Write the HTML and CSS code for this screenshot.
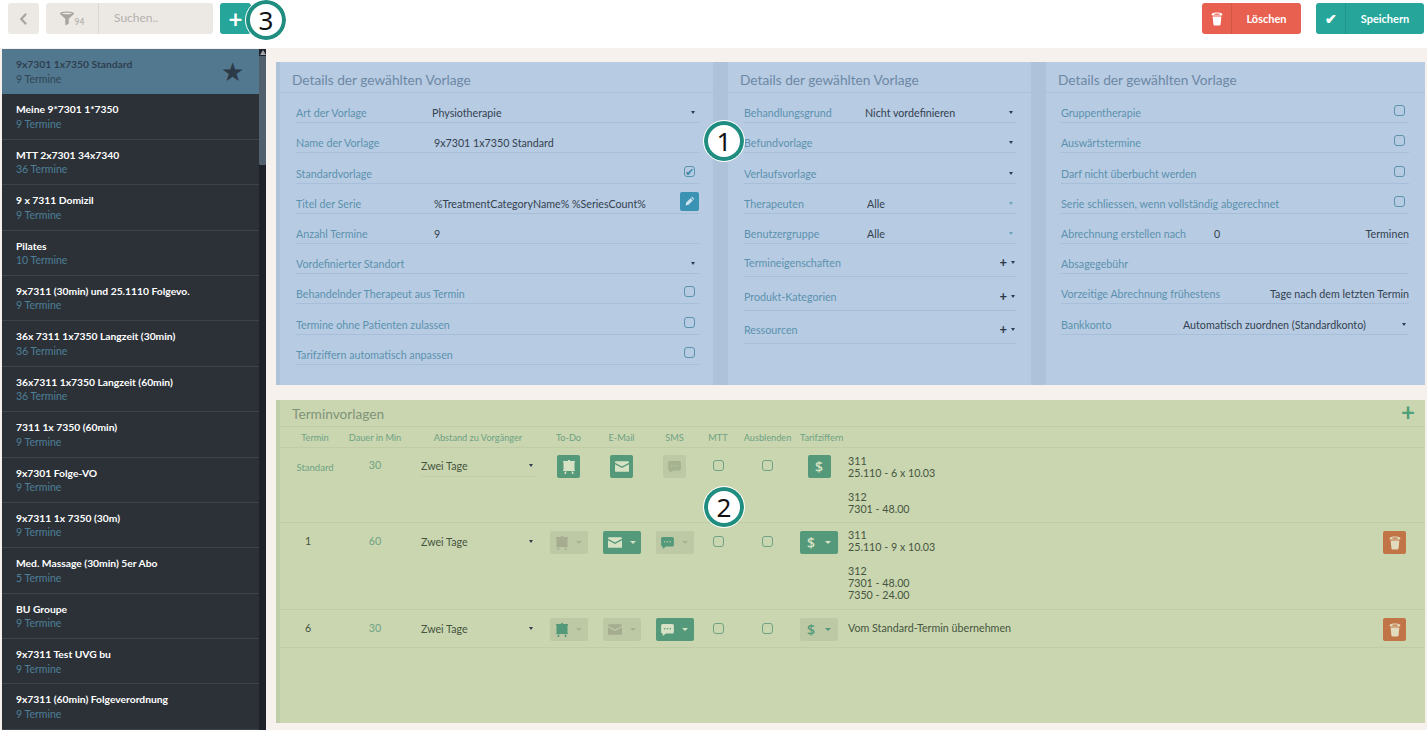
FILE: index.html
```html
<!DOCTYPE html>
<html lang="de">
<head>
<meta charset="utf-8">
<title>Serienvorlagen</title>
<link rel="stylesheet" href="styles.css">
</head>
<body>
<svg class="defs" width="0" height="0" aria-hidden="true">
  <symbol id="i-trash" viewBox="0 0 14 16"><path fill="currentColor" fill-rule="evenodd" d="M7 .4c3 0 6.300.7 6.300 2.300 0 .6-.4 1-1 1.300H1.700c-.6-.3-1-.7-1-1.300C.7 1.100 4 .4 7 .4zM7 1.700c-1.800 0-3.300.3-3.300.7S5.200 3 7 3s3.300-.2 3.300-.6S8.800 1.700 7 1.700zM1.900 5h10.200l-.9 9c-.1 1-.8 1.600-1.800 1.600H4.600c-1 0-1.700-.6-1.800-1.600z"/></symbol>
  <symbol id="i-board" viewBox="0 0 12 14"><path fill="currentColor" d="M5 0h2v1h5v1.200h-.5V10h.5v1H0v-1h.5V2.200H0V1h5zM2 11.500h1.500L3 14H1.300zM8.500 11.500H10l.7 2.500H9z"/></symbol>
  <symbol id="i-mail" viewBox="0 0 16 12"><path fill="currentColor" d="M1 0h14c.6 0 1 .4 1 1v.6L8 6 0 1.600V1c0-.6.400-1 1-1zM0 3.400l8 4.400 8-4.400V11c0 .6-.4 1-1 1H1c-.6 0-1-.4-1-1z"/></symbol>
  <symbol id="i-chat" viewBox="0 0 16 15"><path fill="currentColor" fill-rule="evenodd" d="M2 0h12c1.100 0 2 .9 2 2v8c0 1.100-.9 2-2 2H6l-4 3v-3c-1.100 0-2-.9-2-2V2C0 .9.900 0 2 0zm2.500 5a1 1 0 100 2 1 1 0 000-2zm3.500 0a1 1 0 100 2 1 1 0 000-2zm3.500 0a1 1 0 100 2 1 1 0 000-2z"/></symbol>
  <symbol id="i-funnel" viewBox="0 0 16 16"><path fill="currentColor" fill-rule="evenodd" d="M8 0c4 0 8 .9 8 2.300 0 .6-.4 1-.9 1.400L10 8.300V14l-4 2V8.300L.9 3.700C.4 3.300 0 2.900 0 2.300 0 .9 4 0 8 0zm0 1.400c-3 0-5.600.5-5.600.9s2.600.9 5.600.9 5.600-.5 5.600-.9-2.600-.9-5.600-.9z"/></symbol>
</svg>

<header class="topbar">
  <button class="btn-back" type="button" aria-label="Zurück"><svg class="back-icon" viewBox="0 0 10 16"><path d="M8 2L2.500 8 8 14" fill="none" stroke="currentColor" stroke-width="2.600"/></svg></button>
  <div class="search">
    <span class="search-filter"><svg class="funnel"><use href="#i-funnel"/></svg><small>94</small></span>
    <span class="search-text">Suchen..</span>
  </div>
  <button class="btn-add" type="button">+</button>
  <div class="top-actions">
    <button class="action action-del" type="button"><span class="action-icon"><svg class="action-svg"><use href="#i-trash"/></svg></span><span class="action-label">Löschen</span></button>
    <button class="action action-save" type="button"><span class="action-icon">✔</span><span class="action-label">Speichern</span></button>
  </div>
</header>

<div class="app">
  <aside class="sidebar">
    <ul class="list">
      <li class="item item-active"><b>9x7301 1x7350 Standard</b><span>9 Termine</span><i class="star">★</i></li>
      <li class="item"><b>Meine 9*7301 1*7350</b><span>9 Termine</span></li>
      <li class="item"><b>MTT 2x7301 34x7340</b><span>36 Termine</span></li>
      <li class="item"><b>9 x 7311 Domizil</b><span>9 Termine</span></li>
      <li class="item"><b>Pilates</b><span>10 Termine</span></li>
      <li class="item"><b>9x7311 (30min) und 25.1110 Folgevo.</b><span>9 Termine</span></li>
      <li class="item"><b>36x 7311 1x7350 Langzeit (30min)</b><span>36 Termine</span></li>
      <li class="item"><b>36x7311 1x7350 Langzeit (60min)</b><span>36 Termine</span></li>
      <li class="item"><b>7311 1x 7350 (60min)</b><span>9 Termine</span></li>
      <li class="item"><b>9x7301 Folge-VO</b><span>9 Termine</span></li>
      <li class="item"><b>9x7311 1x 7350 (30m)</b><span>9 Termine</span></li>
      <li class="item"><b>Med. Massage (30min) 5er Abo</b><span>5 Termine</span></li>
      <li class="item"><b>BU Groupe</b><span>9 Termine</span></li>
      <li class="item"><b>9x7311 Test UVG bu</b><span>9 Termine</span></li>
      <li class="item"><b>9x7311 (60min) Folgeverordnung</b><span>9 Termine</span></li>
    </ul>
    <div class="scrollbar"><span class="scroll-arrow"></span><span class="scroll-thumb"></span></div>
  </aside>

  <main class="main">
    <section class="details">
      <div class="col col-1">
        <h2 class="col-title">Details der gewählten Vorlage</h2>
        <div class="row"><label>Art der Vorlage</label><span class="val">Physiotherapie</span><i class="caret"></i></div>
        <div class="row"><label>Name der Vorlage</label><span class="val val-shift">9x7301 1x7350 Standard</span></div>
        <div class="row"><label>Standardvorlage</label><span class="val"></span><i class="check checked">✔</i></div>
        <div class="row"><label>Titel der Serie</label><span class="val val-shift">%TreatmentCategoryName% %SeriesCount%</span><button class="edit-btn" type="button" aria-label="Bearbeiten"><svg viewBox="0 0 12 12" class="pencil"><path fill="currentColor" d="M8.500.8l2.700 2.700-1.100 1.100-2.700-2.700zM6.700 2.600l2.700 2.700-5.300 5.300-3.400.8.700-3.500z"/></svg></button></div>
        <div class="row"><label>Anzahl Termine</label><span class="val val-shift">9</span></div>
        <div class="row"><label class="wide">Vordefinierter Standort</label><span class="val"></span><i class="caret"></i></div>
        <div class="row"><label class="wide">Behandelnder Therapeut aus Termin</label><span class="val"></span><i class="check"></i></div>
        <div class="row"><label class="wide">Termine ohne Patienten zulassen</label><span class="val"></span><i class="check"></i></div>
        <div class="row"><label class="wide">Tarifziffern automatisch anpassen</label><span class="val"></span><i class="check"></i></div>
      </div>
      <div class="col col-2">
        <h2 class="col-title">Details der gewählten Vorlage</h2>
        <div class="row"><label>Behandlungsgrund</label><span class="val">Nicht vordefinieren</span><i class="caret"></i></div>
        <div class="row"><label>Befundvorlage</label><span class="val"></span><i class="caret"></i></div>
        <div class="row"><label>Verlaufsvorlage</label><span class="val"></span><i class="caret"></i></div>
        <div class="row"><label>Therapeuten</label><span class="val val-shift">Alle</span><i class="caret caret-soft"></i></div>
        <div class="row"><label>Benutzergruppe</label><span class="val val-shift">Alle</span><i class="caret caret-soft"></i></div>
        <div class="row row-tall"><label class="wide">Termineigenschaften</label><span class="val"></span><b class="plus">+</b><i class="caret"></i></div>
        <div class="row row-tall"><label class="wide">Produkt-Kategorien</label><span class="val"></span><b class="plus">+</b><i class="caret"></i></div>
        <div class="row row-tall"><label class="wide">Ressourcen</label><span class="val"></span><b class="plus">+</b><i class="caret"></i></div>
      </div>
      <div class="col col-3">
        <h2 class="col-title">Details der gewählten Vorlage</h2>
        <div class="row"><label class="wide">Gruppentherapie</label><span class="val"></span><i class="check"></i></div>
        <div class="row"><label class="wide">Auswärtstermine</label><span class="val"></span><i class="check"></i></div>
        <div class="row"><label class="wide">Darf nicht überbucht werden</label><span class="val"></span><i class="check"></i></div>
        <div class="row"><label class="wide">Serie schliessen, wenn vollständig abgerechnet</label><span class="val"></span><i class="check"></i></div>
        <div class="row"><label class="lbl-153">Abrechnung erstellen nach</label><span class="val">0</span><span class="val-end">Terminen</span></div>
        <div class="row"><label class="wide">Absagegebühr</label><span class="val"></span></div>
        <div class="row"><label class="wide">Vorzeitige Abrechnung frühestens</label><span class="val"></span><span class="val-end">Tage nach dem letzten Termin</span></div>
        <div class="row"><label class="lbl-122">Bankkonto</label><span class="val">Automatisch zuordnen (Standardkonto)</span><i class="caret"></i></div>
      </div>
    </section>

    <section class="templates">
      <div class="tpl-head"><h2 class="col-title tpl-title">Terminvorlagen</h2><span class="tpl-plus">+</span></div>
      <div class="grid grid-head">
        <span class="head-first">Termin</span><span>Dauer in Min</span><span class="head-gap">Abstand zu Vorgänger</span><span>To-Do</span><span>E-Mail</span><span>SMS</span><span>MTT</span><span>Ausblenden</span><span>Tarifziffern</span><span></span><span></span>
      </div>

      <div class="grid grid-row row-a">
        <span class="c-std">Standard</span><span class="c-dur">30</span>
        <span class="sel"><em>Zwei Tage</em><i class="caret"></i></span>
        <span class="cell"><button class="tb on tb-solo" type="button"><svg class="ic"><use href="#i-board"/></svg></button></span>
        <span class="cell"><button class="tb on tb-solo" type="button"><svg class="ic ic-mail"><use href="#i-mail"/></svg></button></span>
        <span class="cell"><button class="tb off tb-solo" type="button"><svg class="ic ic-chat"><use href="#i-chat"/></svg></button></span>
        <span class="cell"><i class="check g"></i></span><span class="cell"><i class="check g"></i></span>
        <span class="cell"><button class="tb on tb-solo dollar" type="button">$</button></span>
        <div class="codes"><p>311<br>25.110 - 6 x 10.03</p><p>312<br>7301 - 48.00</p></div>
        <span></span>
      </div>

      <div class="grid grid-row row-b">
        <span class="c-num">1</span><span class="c-dur">60</span>
        <span class="sel sel-bare"><em>Zwei Tage</em><i class="caret"></i></span>
        <span class="cell"><button class="tb off" type="button"><svg class="ic ic-dim"><use href="#i-board"/></svg><i class="tc"></i></button></span>
        <span class="cell"><button class="tb on" type="button"><svg class="ic ic-mail"><use href="#i-mail"/></svg><i class="tc"></i></button></span>
        <span class="cell"><button class="tb off" type="button"><svg class="ic ic-chat ic-green"><use href="#i-chat"/></svg><i class="tc"></i></button></span>
        <span class="cell"><i class="check g"></i></span><span class="cell"><i class="check g"></i></span>
        <span class="cell"><button class="tb on dollar" type="button">$<i class="tc"></i></button></span>
        <div class="codes"><p>311<br>25.110 - 9 x 10.03</p><p>312<br>7301 - 48.00<br>7350 - 24.00</p></div>
        <span class="cell-trash"><button class="trash" type="button" aria-label="Löschen"><svg class="trash-ic"><use href="#i-trash"/></svg></button></span>
      </div>

      <div class="grid grid-row row-c">
        <span class="c-num">6</span><span class="c-dur">30</span>
        <span class="sel sel-bare"><em>Zwei Tage</em><i class="caret"></i></span>
        <span class="cell"><button class="tb off" type="button"><svg class="ic ic-green"><use href="#i-board"/></svg><i class="tc"></i></button></span>
        <span class="cell"><button class="tb off" type="button"><svg class="ic ic-mail ic-dim"><use href="#i-mail"/></svg><i class="tc tc-dim"></i></button></span>
        <span class="cell"><button class="tb on" type="button"><svg class="ic ic-chat"><use href="#i-chat"/></svg><i class="tc"></i></button></span>
        <span class="cell"><i class="check g"></i></span><span class="cell"><i class="check g"></i></span>
        <span class="cell"><button class="tb off dollar dollar-off" type="button">$<i class="tc"></i></button></span>
        <div class="codes codes-one"><p>Vom Standard-Termin übernehmen</p></div>
        <span class="cell-trash"><button class="trash" type="button" aria-label="Löschen"><svg class="trash-ic"><use href="#i-trash"/></svg></button></span>
      </div>
    </section>
  </main>
</div>

<span class="marker marker-1">1</span>
<span class="marker marker-2">2</span>
<span class="marker marker-3">3</span>
</body>
</html>
```

FILE: styles.css
```css
* { box-sizing: border-box; }
html, body { margin: 0; padding: 0; height: 730px; overflow: hidden; }
body { font-family: "Lato", "Open Sans", sans-serif; font-size: 10.7px; background: #fff; color: #33424f; position: relative; }
.defs { position: absolute; }
button { font-family: inherit; border: 0; padding: 0; margin: 0; }
ul { list-style: none; margin: 0; padding: 0; }
p, h2 { margin: 0; }

/* top bar */
.topbar { height: 48px; display: flex; align-items: flex-start; padding: 3px 3px 0 8px; background: #fff; }
.btn-back { width: 31px; height: 31px; background: #ece9e5; border-radius: 3px; color: #a9a6a2; display: flex; align-items: center; justify-content: center; }
.back-icon { width: 9px; height: 14px; }
.search { margin-left: 7px; width: 167px; height: 31px; background: #ece9e5; border-radius: 3px; display: flex; align-items: center; }
.search-filter { width: 53px; height: 31px; border-right: 1px solid #dcd8d3; display: flex; align-items: center; justify-content: center; color: #a8a5a1; gap: 1px; }
.funnel { width: 14px; height: 15px; }
.search-filter small { font-size: 8.5px; margin-top: 6px; }
.search-text { padding-left: 15px; margin-top: -2px; color: #b3b0ac; font-size: 12px; }
.btn-add { margin-left: 7px; width: 31px; height: 31px; background: #26a69a; border-radius: 3px; color: #fff; font-size: 24px; line-height: 29px; font-weight: 700; }
.top-actions { margin-left: auto; display: flex; gap: 15px; }
.action { height: 31px; display: flex; color: #fff; border-radius: 3px; font-size: 11px; font-weight: 700; overflow: hidden; }
.action-del { width: 99px; background: #e8604f; }
.action-save { width: 108px; background: #26a69a; }
.action-icon { width: 30px; display: flex; align-items: center; justify-content: center; border-right: 1px solid rgba(0,0,0,.1); font-size: 14px; }
.action-svg { width: 12px; height: 14px; }
.action-label { flex: 1; align-self: center; text-align: center; }

/* layout */
.app { display: flex; height: 682px; background: #f6f1ed; }
.sidebar { width: 264px; margin-left: 2px; flex: none; margin-top: 1px; background: #2c3138; display: flex; overflow: hidden; }
.list { flex: 1; min-width: 0; }
.item { height: 45.400px; padding: 8px 14px 0; border-bottom: 1px solid #3d434b; position: relative; display: flex; flex-direction: column; color: #fff; line-height: 15.500px; }
.item b { font-size: 10.300px; font-weight: 700; line-height: 14.500px; white-space: nowrap; }
.item span { color: #4d7f96; font-size: 10.500px; }
.item-active { background: #52788f; border-bottom: 0; }
.item-active b { color: #2f3f50; font-weight: 700; }
.item-active span { color: #2f4454; }
.star { position: absolute; right: 15px; top: 8px; font-style: normal; font-size: 26px; line-height: 29px; color: #2c3a47; }
.scrollbar { width: 7px; flex: none; background: #1f2329; position: relative; }
.scroll-arrow { display: block; width: 0; height: 0; margin: 1px auto 0; border: 3px solid transparent; border-top: 0; border-bottom: 5px solid #9fa6ad; }
.scroll-thumb { display: block; margin-top: 1px; height: 109px; background: #52606e; border-radius: 1px; }
.main { flex: 1; min-width: 0; padding: 14px 2px 7px 10px; display: flex; flex-direction: column; gap: 15px; }

/* details */
.details { height: 323px; background: #aec3d9; padding-left: 4px; display: flex; gap: 15px; }
.col { background: #b7cbe3; }
.col-1 { width: 433px; padding: 0 14px 0 0; }
.col-2 { width: 303px; padding-right: 15px; }
.col-3 { flex: 1; padding-right: 16px; }
.col-title { height: 31px; margin-right: -15px; padding: 8px 0 0 12px; font-size: 13.700px; line-height: 20px; font-weight: 400; color: #6d88a4; border-bottom: 1px solid #abc1da; }
.col-1 .col-title { margin-right: -14px; }
.col-3 .col-title { margin-right: -16px; }
.row { margin-left: 16px; height: 30.200px; padding-bottom: 2px; display: flex; align-items: flex-end; border-bottom: 1px solid #a7bfd8; }
.col-3 .row { margin-left: 15px; }
.row-tall { height: 33.300px; padding-bottom: 6px; }
.row label { width: 136px; flex: none; color: #5b92ad; line-height: 15px; white-space: nowrap; }
.row label.wide { width: auto; }
.col-2 .row label { width: 121px; }
.col-2 .row label.wide { width: auto; }
.row label.lbl-153 { width: 153px; }
.row label.lbl-122 { width: 122px; }
.val { flex: 1; line-height: 15px; color: #33424f; white-space: nowrap; }
.val-shift { padding-left: 2px; }
.val-end { line-height: 15px; white-space: nowrap; }
.caret { flex: none; width: 0; height: 0; border: 2.500px solid transparent; border-top: 3px solid #2f3d4e; border-bottom: 0; margin: 0 4px 6px 0; }
.col-2 .caret, .col-3 .caret { margin-right: 3px; }
.caret-soft { border-top-color: #6fa3bc; }
.plus { flex: none; margin: 0 4px 0 0; font-size: 13px; line-height: 15px; color: #2b3948; }
.col-2 .plus + .caret { margin-right: 1px; }
.check { flex: none; width: 11px; height: 11px; border: 1px solid #5b92ad; border-radius: 3px; margin: 0 4px 5px 0; position: relative; top: 1px; font-style: normal; }
.check.checked { color: #3f8aa8; font-size: 11px; line-height: 9px; text-align: center; }
.edit-btn { flex: none; width: 19px; height: 19px; background: #3b93b3; border-radius: 2px; color: #cfe2ef; display: flex; align-items: center; justify-content: center; }
.pencil { width: 10px; height: 10px; }

/* templates */
.templates { height: 323px; background: #cad6b0; border-left: 4px solid #bfcea8; }
.tpl-head { height: 27px; border-bottom: 1px solid #bfcca5; display: flex; justify-content: space-between; }
.tpl-title { height: auto; margin: 0; border: 0; padding: 4px 0 0 12px; color: #7f9379; }
.tpl-plus { color: #4f9f78; font-size: 24px; line-height: 23px; padding-right: 10px; font-weight: 700; }
.grid { display: grid; grid-template-columns: 65px 60px 137px 53px 53px 53px 34px 65px 38px 1fr 42px; }
.grid-head { height: 21px; align-items: center; text-align: center; color: #6fa283; font-size: 9.200px; border-bottom: 1px solid #bfcca5; white-space: nowrap; }
.head-first { padding-left: 5px; }
.head-gap { padding-left: 9px; }
.grid-row { padding-top: 7px; border-bottom: 1px solid #bfcca5; align-items: start; }
.row-a { height: 75px; }
.row-b { height: 87px; padding-top: 8px; }
.row-c { height: 38px; padding-top: 8px; }
.c-std, .c-num, .c-dur { text-align: center; padding-top: 3px; line-height: 14px; }
.c-std { color: #6fa283; font-size: 9.500px; padding-top: 6px; padding-left: 5px; }
.c-dur { color: #6fa283; }
.c-num { color: #45553f; padding-right: 9px; }
.sel { margin: 0 7px 0 16px; height: 22px; display: flex; align-items: center; justify-content: space-between; border-bottom: 1px solid #bfcca5; color: #45553f; }
.sel-bare { border-bottom-color: transparent; }
.sel em { font-style: normal; }
.sel .caret { margin: 0 2px 0 0; }
.cell { display: flex; justify-content: center; }
.cell .check { margin: 5px 0 0; top: 0; }
.check.g { border-color: #6fa283; width: 11px; height: 11px; }
.tb { width: 38px; height: 23px; border-radius: 2px; display: flex; align-items: center; justify-content: center; gap: 8px; }
.tb-solo { width: 23px; }
.on { background: #54997a; color: #d7e2c4; }
.off { background: #bcc9a4; color: #a5b28f; }
.ic { width: 12px; height: 14px; color: inherit; }
.ic-mail { width: 14px; height: 11px; }
.ic-chat { width: 13px; height: 12px; }
.ic-green { color: #54997a; }
.ic-dim { color: #a5ac90; }
.tc { width: 0; height: 0; border: 3px solid transparent; border-top: 3px solid currentColor; border-bottom: 0; }
.tc-dim { color: #a5b28f; }
.dollar { font-family: "Open Sans", sans-serif; font-size: 14px; font-weight: 600; gap: 10px; }
.tb-solo.dollar { gap: 0; }
.dollar-off { color: #54997a; }
.codes { padding: 0 0 0 10px; color: #45553f; line-height: 12px; }
.row-b .codes { margin-top: -2px; }
.codes p + p { margin-top: 12px; }
.codes-one { padding-top: 4px; }
.cell-trash { display: flex; justify-content: flex-start; }
.trash { width: 23px; height: 23px; background: #c17547; border-radius: 2px; color: #e2dcbe; display: flex; align-items: center; justify-content: center; }
.trash-ic { width: 12px; height: 14px; }

/* callouts */
.marker { position: absolute; width: 40px; height: 40px; border-radius: 50%; background: #fff; border: 4px solid #1f8d80; outline: 1px solid #fff; display: flex; align-items: center; justify-content: center; font-size: 26px; line-height: 1; color: #111; font-family: "Noto Sans", sans-serif; }
.marker-1 { left: 704px; top: 121px; }
.marker-2 { left: 704px; top: 487px; }
.marker-3 { left: 246px; top: 0; }
```
